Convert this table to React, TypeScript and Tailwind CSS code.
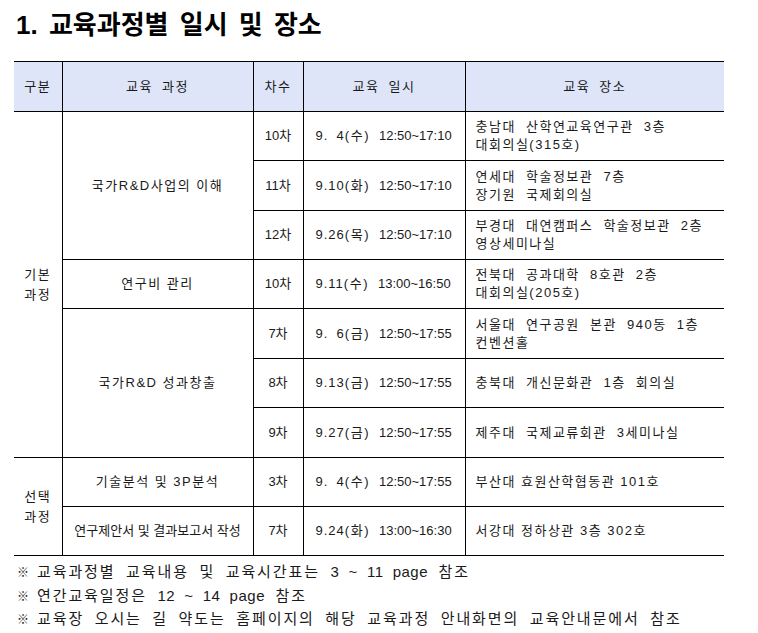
const font = { fontFamily: '"Liberation Sans", "Noto Sans CJK KR", sans-serif' };

type Row = {
  group?: { label: string[]; span: number };
  course?: { name: string; span: number; tight?: boolean };
  no: string;
  d: string;
  w: string;
  t: string;
  place: string[];
  wide?: boolean;
  h: string;
};

const rows: Row[] = [
  { group: { label: ["기본", "과정"], span: 7 }, course: { name: "국가R&D사업의 이해", span: 3 }, no: "10차", d: "9.\u20074", w: "수", t: "12:50~17:10", place: ["충남대 산학연교육연구관 3층", "대회의실(315호)"], wide: true, h: "h-[49px]" },
  { no: "11차", d: "9.10", w: "화", t: "12:50~17:10", place: ["연세대 학술정보관 7층", "장기원 국제회의실"], wide: true, h: "h-[50px]" },
  { no: "12차", d: "9.26", w: "목", t: "12:50~17:10", place: ["부경대 대연캠퍼스 학술정보관 2층", "영상세미나실"], wide: true, h: "h-[49px]" },
  { course: { name: "연구비 관리", span: 1 }, no: "10차", d: "9.11", w: "수", t: "13:00~16:50", place: ["전북대 공과대학 8호관 2층", "대회의실(205호)"], wide: true, h: "h-[49px]" },
  { course: { name: "국가R&D 성과창출", span: 3 }, no: "7차", d: "9.\u20076", w: "금", t: "12:50~17:55", place: ["서울대 연구공원 본관 940동 1층", "컨벤션홀"], wide: true, h: "h-[50px]" },
  { no: "8차", d: "9.13", w: "금", t: "12:50~17:55", place: ["충북대 개신문화관 1층 회의실"], wide: true, h: "h-[49px]" },
  { no: "9차", d: "9.27", w: "금", t: "12:50~17:55", place: ["제주대 국제교류회관 3세미나실"], wide: true, h: "h-[50px]" },
  { group: { label: ["선택", "과정"], span: 2 }, course: { name: "기술분석 및 3P분석", span: 1 }, no: "3차", d: "9.\u20074", w: "수", t: "12:50~17:55", place: ["부산대 효원산학협동관 101호"], h: "h-[49px]" },
  { course: { name: "연구제안서 및 결과보고서 작성", span: 1, tight: true }, no: "7차", d: "9.24", w: "화", t: "13:00~16:30", place: ["서강대 정하상관 3층 302호"], h: "h-[49px]" },
];

const cell = "border border-black text-[13px] leading-[18px] tracking-[1.5px] p-0";

// [before, pages, after]
const notes: [string, string, string][] = [
  ["교육과정별 교육내용 및 교육시간표는 ", "3 ~ 11 page", " 참조"],
  ["연간교육일정은 ", "12 ~ 14 page", " 참조"],
  ["교육장 오시는 길 약도는 홈페이지의 해당 교육과정 안내화면의 교육안내문에서 참조", "", ""],
];

export default function App() {
  return (
    <div className="min-h-screen bg-white text-[#1a1a1a]" style={font}>
      <h1 className="pt-[10px] pl-[16px] text-[26px] leading-[30px] font-bold text-black [word-spacing:4px]">
        1. 교육과정별 일시 및 장소
      </h1>

      <table className="mt-[21px] ml-[14px] w-[710px] table-fixed border-collapse">
        <colgroup>
          <col className="w-[48px]" />
          <col className="w-[191px]" />
          <col className="w-[50px]" />
          <col className="w-[162px]" />
          <col className="w-[259px]" />
        </colgroup>
        <thead>
          <tr className="h-[50px] bg-[#dfe5f8]">
            <th className={`${cell} border-l-0 font-normal`}>구분</th>
            <th className={`${cell} font-normal [word-spacing:4px]`}>교육 과정</th>
            <th className={`${cell} font-normal`}>차수</th>
            <th className={`${cell} font-normal [word-spacing:4px]`}>교육 일시</th>
            <th className={`${cell} border-r-0 font-normal [word-spacing:4px]`}>교육 장소</th>
          </tr>
        </thead>
        <tbody>
          {rows.map((r, i) => (
            <tr key={i} className={r.h}>
              {r.group && (
                <td rowSpan={r.group.span} className={`${cell} border-l-0 text-center leading-[20px]`}>
                  {r.group.label.map((l) => (
                    <div key={l}>{l}</div>
                  ))}
                </td>
              )}
              {r.course && (
                <td
                  rowSpan={r.course.span}
                  className={`${cell} text-center whitespace-nowrap ${r.course.tight ? "tracking-normal" : ""}`}
                >
                  {r.course.name}
                </td>
              )}
              <td className={`${cell} text-center tracking-normal`}>{r.no}</td>
              <td className={`${cell} pl-[12px] whitespace-nowrap`}>
                <span className="tracking-[1px]">{r.d}</span>({r.w})
                <span className="ml-[9px] tracking-normal">{r.t}</span>
              </td>
              <td className={`${cell} border-r-0 pl-[10px] ${r.wide ? "[word-spacing:5px]" : ""}`}>
                {r.place.map((p) => (
                  <div key={p}>{p}</div>
                ))}
              </td>
            </tr>
          ))}
        </tbody>
      </table>

      <div className="pt-[5px] pl-[17px] text-[15px] leading-[21.5px] tracking-[1.9px] [word-spacing:4.5px]">
        {notes.map(([a, pages, b]) => (
          <p key={a}>
            <span className="mr-[8px] text-[12px] tracking-normal">※</span>
            {a}
            {pages && <span className="tracking-[0.5px]">{pages}</span>}
            {b}
          </p>
        ))}
      </div>
    </div>
  );
}
